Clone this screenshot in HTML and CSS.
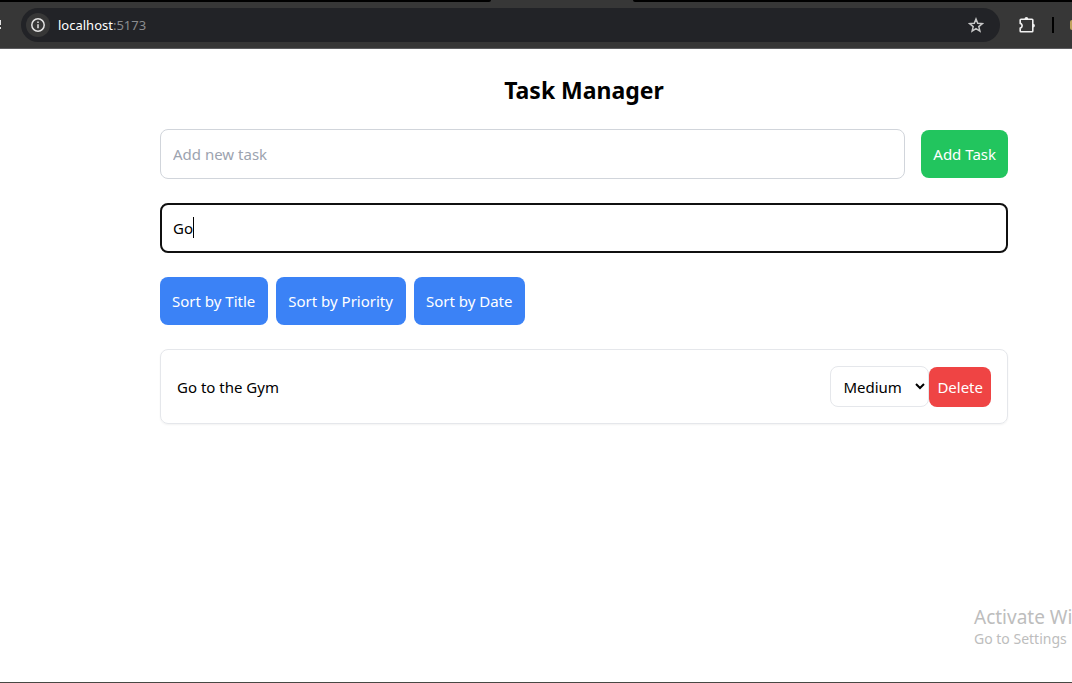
FILE: index.html
```html
<!DOCTYPE html>
<html lang="en">
<head>
<meta charset="utf-8">
<title>Task Manager</title>
<link rel="stylesheet" href="styles.css">
</head>
<body>
<header class="browser">
  <div class="tabs"><span class="tabs-left"></span><span class="tabs-right"></span></div>
  <div class="toolbar">
    <svg class="reload" width="2" height="12" viewBox="0 0 2 12" fill="#e3e3e3"><path d="M0 1h1v5H0zM0 8h1v2H0z"/></svg>
    <div class="address">
      <button class="info" aria-label="View site information">
        <svg width="16" height="16" viewBox="0 0 16 16" fill="none" stroke="#e3e3e3" stroke-width="1.5"><circle cx="8" cy="8" r="6.2"/><path d="M8 7.2v4M8 4.4v1.6"/></svg>
      </button>
      <span class="url">localhost<span class="port">:5173</span></span>
      <button class="star" aria-label="Bookmark this tab">
        <svg width="16" height="16" viewBox="0 0 16 16" fill="none" stroke="#c7c7c7" stroke-width="1.5"><path d="M8 2l1.700 4.200 4.600.4-3.500 3 1.100 4.500L8 11.700l-3.900 2.400 1.100-4.500-3.500-3 4.600-.4z"/></svg>
      </button>
    </div>
    <button class="extensions" aria-label="Extensions">
      <svg width="18" height="18" viewBox="0 0 18 18" fill="none"><path d="M3 3.200H14a.8.8 0 0 1 .8.8V15a.8.8 0 0 1-.8.800H3a.8.8 0 0 1-.8-.8v-3a2 2 0 0 0 1.800-2.300A2 2 0 0 0 2.200 7.400V4a.8.8 0 0 1 .8-.800z" stroke="#f1f1f1" stroke-width="1.600" stroke-linejoin="round"/><path d="M6.500 3a1.900 1.900 0 0 1 3.800 0zM15 7.700a1.900 1.900 0 0 1 0 3.800z" fill="#f1f1f1"/></svg>
    </button>
    <span class="divider"></span>
    <span class="avatar"></span>
  </div>
</header>
<main class="page">
  <h1 class="title">Task Manager</h1>
  <form class="add-row">
    <input class="field" type="text" placeholder="Add new task" aria-label="New task">
    <button class="btn btn-add" type="button">Add Task</button>
  </form>
  <div class="search">
    <input class="field field-active" type="text" value="Go" aria-label="Search tasks">
    <span class="caret"></span>
  </div>
  <div class="sorts">
    <button class="btn btn-sort">Sort by Title</button>
    <button class="btn btn-sort">Sort by Priority</button>
    <button class="btn btn-sort">Sort by Date</button>
  </div>
  <ul class="tasks">
    <li class="task">
      <span class="task-name">Go to the Gym</span>
      <div class="task-actions">
        <select class="priority" aria-label="Priority"><option>Low</option><option selected>Medium</option><option>High</option></select>
        <button class="btn btn-delete">Delete</button>
      </div>
    </li>
  </ul>
</main>
<aside class="watermark">
  <p class="watermark-title">Activate Wi</p>
  <p class="watermark-text">Go to Settings</p>
</aside>
</body>
</html>
```
FILE: styles.css
```css
* { box-sizing: border-box; }
body {
  margin: 0;
  min-height: 100vh;
  display: flex;
  flex-direction: column;
  position: relative;
  overflow: hidden;
  background: #fff;
  border-bottom: 1px solid #484843;
  color: #000;
  font: 15px/24px "Segoe UI", "Noto Sans", "Open Sans", sans-serif;
}
button, input, select { font: inherit; margin: 0; }
button { border: 0; padding: 0; background: none; color: inherit; }
.browser { background: #373737; border-bottom: 1px solid #5c5c5f; }
.tabs { display: flex; justify-content: space-between; height: 2px; }
.tabs-left { width: 491px; background: #000; border-bottom-right-radius: 2px; }
.tabs-right { width: 439px; background: #000; border-bottom-left-radius: 2px; }
.toolbar { display: flex; align-items: center; height: 46px; overflow: hidden; }
.reload { margin-right: 19px; }
.address {
  flex: 1;
  display: flex;
  align-items: center;
  height: 34px;
  padding: 0 16px 0 5px;
  border-radius: 17px;
  background: #222327;
}
.info {
  display: grid;
  place-items: center;
  width: 24px;
  height: 24px;
  border-radius: 50%;
  background: #373737;
}
.url { flex: 1; margin-left: 8px; color: #fff; font-size: 13px; }
.port { color: #8b8c8f; }
.star, .extensions { display: grid; }
.extensions { margin: 0 16px 0 18px; }
.divider { width: 2px; height: 16px; background: #000; }
.avatar { width: 2px; height: 10px; margin-left: 16px; border-radius: 2px 0 0 2px; background: #bfa25c; }
.page {
  display: flex;
  flex-direction: column;
  gap: 24px;
  padding: 25px 64px 24px 160px;
}
.title { margin: 0 0 -1px; font-size: 23px; line-height: 32px; font-weight: 700; text-align: center; }
.add-row { display: flex; align-items: center; gap: 16px; }
.field {
  display: block;
  width: 100%;
  min-width: 0;
  height: 50px;
  padding: 12px;
  border: 1px solid #d1d5db;
  border-radius: 8px;
  background: #fff;
  color: #000;
}
.add-row .field { flex: 1; }
.field::placeholder { color: #9ca3af; }
.search { position: relative; }
.field-active { padding: 11px; border: 2px solid #101010; }
.caret { position: absolute; left: 33px; top: 14px; width: 1px; height: 21px; background: #000; }
.btn { border-radius: 8px; color: #fff; white-space: nowrap; }
.btn-add { padding: 12px; background: #22c55e; }
.sorts { display: flex; gap: 8px; }
.btn-sort { padding: 12px 13px 12px 12px; background: #3b82f6; }
.tasks { margin: 0; padding: 0; list-style: none; }
.task {
  display: flex;
  align-items: center;
  justify-content: space-between;
  padding: 16px;
  border: 1px solid #e5e7eb;
  border-radius: 8px;
  box-shadow: 0 1px 2px rgba(0, 0, 0, 0.05);
}
.task-actions { display: flex; align-items: center; }
.priority {
  width: 99px;
  height: 41px;
  padding: 8px 1px 8px 8px;
  border: 1px solid #e5e7eb;
  border-radius: 8px;
  background: #fff;
  color: #000;
}
.btn-delete { padding: 8px; background: #ef4444; }
.watermark {
  position: absolute;
  left: 974px;
  right: 0;
  bottom: 33px;
  white-space: nowrap;
  color: #bdbdbd;
}
.watermark p { margin: 0; }
.watermark-title { font-size: 19px; line-height: 24px; }
.watermark-text { font-size: 14px; line-height: 20px; }
```
